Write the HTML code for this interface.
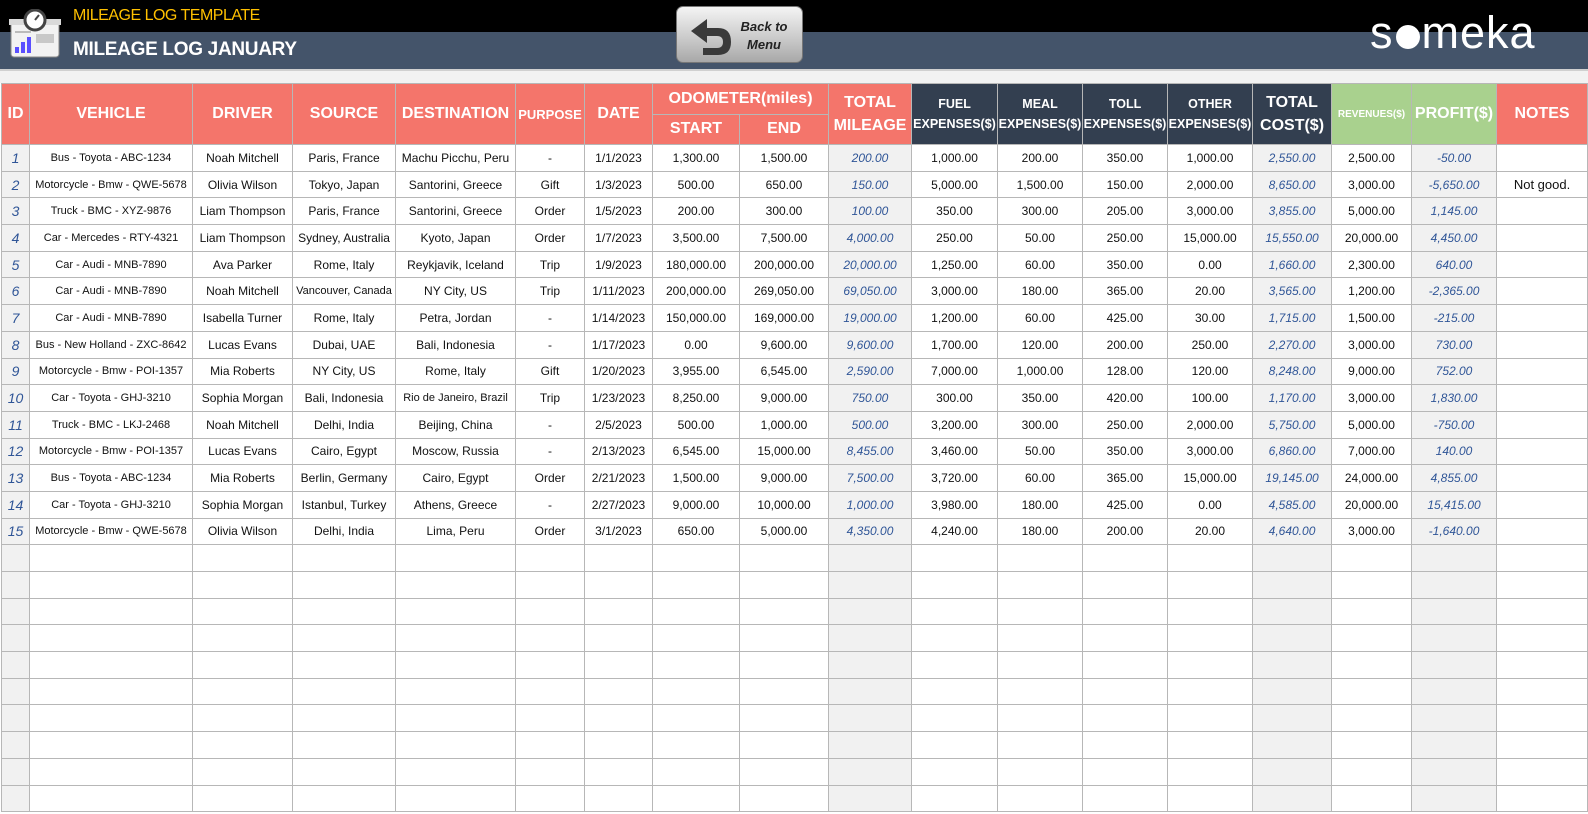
<!DOCTYPE html>
<html><head><meta charset="utf-8"><style>
*{margin:0;padding:0;box-sizing:border-box}
body{width:1588px;height:814px;overflow:hidden;background:#fff;font-family:"Liberation Sans",sans-serif;position:relative}
#top{position:absolute;left:0;top:0;width:1588px;height:32px;background:#000}
#band{position:absolute;left:0;top:32px;width:1588px;height:37px;background:#44546a}
#gap{position:absolute;left:0;top:69px;width:1588px;height:14px;background:#f2f2f2;border-top:2px solid #d0d0d0}
.t1{position:absolute;left:73px;top:7px;color:#ffc000;font-size:16px;letter-spacing:-0.5px}
.t2{position:absolute;left:73px;top:39px;color:#fff;font-size:19px;font-weight:bold;letter-spacing:-0.3px}
.btn{position:absolute;left:676px;top:6px;width:127px;height:57px;border-radius:7px;background:linear-gradient(#f4f4f4,#c8c8c8 60%,#a8a8a8);border:1px solid #777}
.btn span{position:absolute;left:62px;top:11px;font-size:13px;font-weight:bold;font-style:italic;color:#222;text-align:center;line-height:18px;width:50px}
.logo{position:absolute;left:1370px;top:7px;color:#fff;font-size:45px;letter-spacing:1px}
table{position:absolute;left:1px;top:83px;border-collapse:collapse;table-layout:fixed;width:1586px}
td,th{border:1px solid #b7b7b7;text-align:center;white-space:nowrap;overflow:hidden;font-size:12px;padding:0;color:#111}
tr{height:26.7px}
tr.h{height:30.5px}
th{color:#fff;font-weight:bold}
.s{background:#f4756b;font-size:16px}
.d{background:#333f50;font-size:12.5px;line-height:20px}
.g{background:#a9d18e}
.sh{background:#f1f1f1}
.b{color:#2f5597;font-style:italic}
.id{background:#f1f1f1;color:#2f5597;font-style:italic;font-size:14px}
.v{font-size:11px}
</style></head><body>
<div id="top"></div><div id="band"></div><div id="gap"></div>
<svg style="position:absolute;left:9px;top:9px" width="52" height="50" viewBox="0 0 52 50">
<rect x="2" y="12" width="48" height="36" rx="3" fill="#f2f2f2" stroke="#888"/>
<rect x="0" y="10" width="52" height="6" fill="#d9d9d9"/>
<circle cx="26" cy="11" r="10" fill="#fff" stroke="#444" stroke-width="3"/>
<line x1="26" y1="11" x2="30" y2="6" stroke="#444" stroke-width="2"/>
<rect x="6" y="38" width="4" height="6" fill="#5a4fff"/><rect x="12" y="33" width="4" height="11" fill="#5a4fff"/><rect x="18" y="28" width="4" height="16" fill="#5a4fff"/>
<rect x="27" y="25" width="18" height="9" fill="#c8c8c8"/><rect x="6" y="22" width="16" height="2" fill="#bbb"/>
</svg>
<div class="t1">MILEAGE LOG TEMPLATE</div>
<div class="t2">MILEAGE LOG JANUARY</div>
<div class="btn"><svg style="position:absolute;left:10px;top:8px" width="48" height="42" viewBox="0 0 48 42"><path d="M20 4 L4 16 L20 28 L20 21 L30 21 Q36 21 36 27 Q36 33 30 33 L16 33 L16 40 L31 40 Q44 40 44 27 Q44 13 31 13 L20 13 Z" fill="#3a3a3a"/></svg><span>Back to Menu</span></div>
<div class="logo">s<span style="display:inline-block;width:24px;height:24px;border-radius:50%;background:#fff;vertical-align:-1px;margin:0 2px"></span>meka</div>
<table>
<colgroup><col style="width:28px"><col style="width:163px"><col style="width:100px"><col style="width:103px"><col style="width:120px"><col style="width:69px"><col style="width:68px"><col style="width:87px"><col style="width:89px"><col style="width:83px"><col style="width:86px"><col style="width:85px"><col style="width:85px"><col style="width:85px"><col style="width:79px"><col style="width:80px"><col style="width:85px"><col style="width:91px"></colgroup>
<tr class="h"><th class="s" rowspan="2">ID</th><th class="s" rowspan="2">VEHICLE</th><th class="s" rowspan="2">DRIVER</th><th class="s" rowspan="2">SOURCE</th><th class="s" rowspan="2">DESTINATION</th><th class="s" rowspan="2" style="font-size:13px">PURPOSE</th><th class="s" rowspan="2">DATE</th><th class="s" colspan="2">ODOMETER(miles)</th><th class="s" rowspan="2" style="line-height:23px">TOTAL<br>MILEAGE</th><th class="d" rowspan="2">FUEL<br>EXPENSES($)</th><th class="d" rowspan="2">MEAL<br>EXPENSES($)</th><th class="d" rowspan="2">TOLL<br>EXPENSES($)</th><th class="d" rowspan="2">OTHER<br>EXPENSES($)</th><th class="d" rowspan="2" style="font-size:16px;line-height:23px">TOTAL<br>COST($)</th><th class="g" rowspan="2" style="font-size:10px">REVENUES($)</th><th class="g" rowspan="2" style="font-size:16px">PROFIT($)</th><th class="s" rowspan="2">NOTES</th></tr>
<tr class="h"><th class="s">START</th><th class="s">END</th></tr>
<tr><td class="id">1</td><td class="v">Bus - Toyota - ABC-1234</td><td>Noah Mitchell</td><td>Paris, France</td><td>Machu Picchu, Peru</td><td>-</td><td>1/1/2023</td><td>1,300.00</td><td>1,500.00</td><td class="sh b">200.00</td><td>1,000.00</td><td>200.00</td><td>350.00</td><td>1,000.00</td><td class="sh b">2,550.00</td><td>2,500.00</td><td class="sh b">-50.00</td><td></td></tr>
<tr><td class="id">2</td><td class="v">Motorcycle - Bmw - QWE-5678</td><td>Olivia Wilson</td><td>Tokyo, Japan</td><td>Santorini, Greece</td><td>Gift</td><td>1/3/2023</td><td>500.00</td><td>650.00</td><td class="sh b">150.00</td><td>5,000.00</td><td>1,500.00</td><td>150.00</td><td>2,000.00</td><td class="sh b">8,650.00</td><td>3,000.00</td><td class="sh b">-5,650.00</td><td style="font-size:13px">Not good.</td></tr>
<tr><td class="id">3</td><td class="v">Truck - BMC - XYZ-9876</td><td>Liam Thompson</td><td>Paris, France</td><td>Santorini, Greece</td><td>Order</td><td>1/5/2023</td><td>200.00</td><td>300.00</td><td class="sh b">100.00</td><td>350.00</td><td>300.00</td><td>205.00</td><td>3,000.00</td><td class="sh b">3,855.00</td><td>5,000.00</td><td class="sh b">1,145.00</td><td></td></tr>
<tr><td class="id">4</td><td class="v">Car - Mercedes - RTY-4321</td><td>Liam Thompson</td><td>Sydney, Australia</td><td>Kyoto, Japan</td><td>Order</td><td>1/7/2023</td><td>3,500.00</td><td>7,500.00</td><td class="sh b">4,000.00</td><td>250.00</td><td>50.00</td><td>250.00</td><td>15,000.00</td><td class="sh b">15,550.00</td><td>20,000.00</td><td class="sh b">4,450.00</td><td></td></tr>
<tr><td class="id">5</td><td class="v">Car - Audi - MNB-7890</td><td>Ava Parker</td><td>Rome, Italy</td><td>Reykjavik, Iceland</td><td>Trip</td><td>1/9/2023</td><td>180,000.00</td><td>200,000.00</td><td class="sh b">20,000.00</td><td>1,250.00</td><td>60.00</td><td>350.00</td><td>0.00</td><td class="sh b">1,660.00</td><td>2,300.00</td><td class="sh b">640.00</td><td></td></tr>
<tr><td class="id">6</td><td class="v">Car - Audi - MNB-7890</td><td>Noah Mitchell</td><td class="v">Vancouver, Canada</td><td>NY City, US</td><td>Trip</td><td>1/11/2023</td><td>200,000.00</td><td>269,050.00</td><td class="sh b">69,050.00</td><td>3,000.00</td><td>180.00</td><td>365.00</td><td>20.00</td><td class="sh b">3,565.00</td><td>1,200.00</td><td class="sh b">-2,365.00</td><td></td></tr>
<tr><td class="id">7</td><td class="v">Car - Audi - MNB-7890</td><td>Isabella Turner</td><td>Rome, Italy</td><td>Petra, Jordan</td><td>-</td><td>1/14/2023</td><td>150,000.00</td><td>169,000.00</td><td class="sh b">19,000.00</td><td>1,200.00</td><td>60.00</td><td>425.00</td><td>30.00</td><td class="sh b">1,715.00</td><td>1,500.00</td><td class="sh b">-215.00</td><td></td></tr>
<tr><td class="id">8</td><td class="v">Bus - New Holland - ZXC-8642</td><td>Lucas Evans</td><td>Dubai, UAE</td><td>Bali, Indonesia</td><td>-</td><td>1/17/2023</td><td>0.00</td><td>9,600.00</td><td class="sh b">9,600.00</td><td>1,700.00</td><td>120.00</td><td>200.00</td><td>250.00</td><td class="sh b">2,270.00</td><td>3,000.00</td><td class="sh b">730.00</td><td></td></tr>
<tr><td class="id">9</td><td class="v">Motorcycle - Bmw - POI-1357</td><td>Mia Roberts</td><td>NY City, US</td><td>Rome, Italy</td><td>Gift</td><td>1/20/2023</td><td>3,955.00</td><td>6,545.00</td><td class="sh b">2,590.00</td><td>7,000.00</td><td>1,000.00</td><td>128.00</td><td>120.00</td><td class="sh b">8,248.00</td><td>9,000.00</td><td class="sh b">752.00</td><td></td></tr>
<tr><td class="id">10</td><td class="v">Car - Toyota - GHJ-3210</td><td>Sophia Morgan</td><td>Bali, Indonesia</td><td class="v">Rio de Janeiro, Brazil</td><td>Trip</td><td>1/23/2023</td><td>8,250.00</td><td>9,000.00</td><td class="sh b">750.00</td><td>300.00</td><td>350.00</td><td>420.00</td><td>100.00</td><td class="sh b">1,170.00</td><td>3,000.00</td><td class="sh b">1,830.00</td><td></td></tr>
<tr><td class="id">11</td><td class="v">Truck - BMC - LKJ-2468</td><td>Noah Mitchell</td><td>Delhi, India</td><td>Beijing, China</td><td>-</td><td>2/5/2023</td><td>500.00</td><td>1,000.00</td><td class="sh b">500.00</td><td>3,200.00</td><td>300.00</td><td>250.00</td><td>2,000.00</td><td class="sh b">5,750.00</td><td>5,000.00</td><td class="sh b">-750.00</td><td></td></tr>
<tr><td class="id">12</td><td class="v">Motorcycle - Bmw - POI-1357</td><td>Lucas Evans</td><td>Cairo, Egypt</td><td>Moscow, Russia</td><td>-</td><td>2/13/2023</td><td>6,545.00</td><td>15,000.00</td><td class="sh b">8,455.00</td><td>3,460.00</td><td>50.00</td><td>350.00</td><td>3,000.00</td><td class="sh b">6,860.00</td><td>7,000.00</td><td class="sh b">140.00</td><td></td></tr>
<tr><td class="id">13</td><td class="v">Bus - Toyota - ABC-1234</td><td>Mia Roberts</td><td>Berlin, Germany</td><td>Cairo, Egypt</td><td>Order</td><td>2/21/2023</td><td>1,500.00</td><td>9,000.00</td><td class="sh b">7,500.00</td><td>3,720.00</td><td>60.00</td><td>365.00</td><td>15,000.00</td><td class="sh b">19,145.00</td><td>24,000.00</td><td class="sh b">4,855.00</td><td></td></tr>
<tr><td class="id">14</td><td class="v">Car - Toyota - GHJ-3210</td><td>Sophia Morgan</td><td>Istanbul, Turkey</td><td>Athens, Greece</td><td>-</td><td>2/27/2023</td><td>9,000.00</td><td>10,000.00</td><td class="sh b">1,000.00</td><td>3,980.00</td><td>180.00</td><td>425.00</td><td>0.00</td><td class="sh b">4,585.00</td><td>20,000.00</td><td class="sh b">15,415.00</td><td></td></tr>
<tr><td class="id">15</td><td class="v">Motorcycle - Bmw - QWE-5678</td><td>Olivia Wilson</td><td>Delhi, India</td><td>Lima, Peru</td><td>Order</td><td>3/1/2023</td><td>650.00</td><td>5,000.00</td><td class="sh b">4,350.00</td><td>4,240.00</td><td>180.00</td><td>200.00</td><td>20.00</td><td class="sh b">4,640.00</td><td>3,000.00</td><td class="sh b">-1,640.00</td><td></td></tr>
<tr><td class="id"></td><td></td><td></td><td></td><td></td><td></td><td></td><td></td><td></td><td class="sh"></td><td></td><td></td><td></td><td></td><td class="sh"></td><td></td><td class="sh"></td><td></td></tr>
<tr><td class="id"></td><td></td><td></td><td></td><td></td><td></td><td></td><td></td><td></td><td class="sh"></td><td></td><td></td><td></td><td></td><td class="sh"></td><td></td><td class="sh"></td><td></td></tr>
<tr><td class="id"></td><td></td><td></td><td></td><td></td><td></td><td></td><td></td><td></td><td class="sh"></td><td></td><td></td><td></td><td></td><td class="sh"></td><td></td><td class="sh"></td><td></td></tr>
<tr><td class="id"></td><td></td><td></td><td></td><td></td><td></td><td></td><td></td><td></td><td class="sh"></td><td></td><td></td><td></td><td></td><td class="sh"></td><td></td><td class="sh"></td><td></td></tr>
<tr><td class="id"></td><td></td><td></td><td></td><td></td><td></td><td></td><td></td><td></td><td class="sh"></td><td></td><td></td><td></td><td></td><td class="sh"></td><td></td><td class="sh"></td><td></td></tr>
<tr><td class="id"></td><td></td><td></td><td></td><td></td><td></td><td></td><td></td><td></td><td class="sh"></td><td></td><td></td><td></td><td></td><td class="sh"></td><td></td><td class="sh"></td><td></td></tr>
<tr><td class="id"></td><td></td><td></td><td></td><td></td><td></td><td></td><td></td><td></td><td class="sh"></td><td></td><td></td><td></td><td></td><td class="sh"></td><td></td><td class="sh"></td><td></td></tr>
<tr><td class="id"></td><td></td><td></td><td></td><td></td><td></td><td></td><td></td><td></td><td class="sh"></td><td></td><td></td><td></td><td></td><td class="sh"></td><td></td><td class="sh"></td><td></td></tr>
<tr><td class="id"></td><td></td><td></td><td></td><td></td><td></td><td></td><td></td><td></td><td class="sh"></td><td></td><td></td><td></td><td></td><td class="sh"></td><td></td><td class="sh"></td><td></td></tr>
<tr><td class="id"></td><td></td><td></td><td></td><td></td><td></td><td></td><td></td><td></td><td class="sh"></td><td></td><td></td><td></td><td></td><td class="sh"></td><td></td><td class="sh"></td><td></td></tr>
</table>
</body></html>
